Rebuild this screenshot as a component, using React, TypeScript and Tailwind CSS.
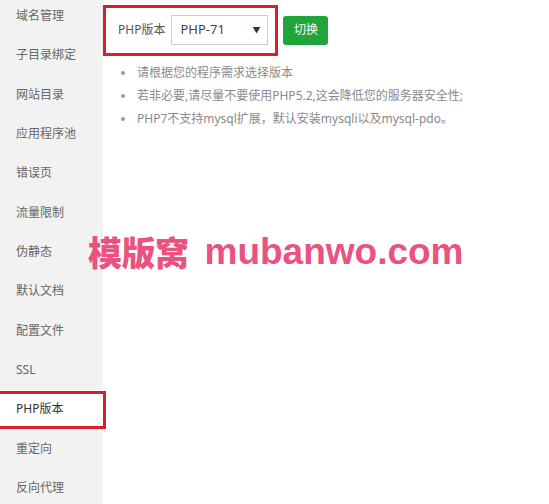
import React from 'react';

const menu = [
  '域名管理',
  '子目录绑定',
  '网站目录',
  '应用程序池',
  '错误页',
  '流量限制',
  '伪静态',
  '默认文档',
  '配置文件',
  'SSL',
  'PHP版本',
  '重定向',
  '反向代理',
];

const tips = [
  '请根据您的程序需求选择版本',
  '若非必要,请尽量不要使用PHP5.2,这会降低您的服务器安全性;',
  'PHP7不支持mysql扩展，默认安装mysqli以及mysql-pdo。',
];

const font = { fontFamily: '"Noto Sans", "Noto Sans CJK SC", sans-serif' };

export default function App() {
  return (
    <div
      className="relative flex w-[549px] h-[504px] overflow-hidden bg-white text-[12px] text-[#555]"
      style={font}
    >
      {/* Sidebar */}
      <div className="w-[103px] shrink-0 bg-[#f2f2f2] flex flex-col mt-[-3.7px]">
        {menu.map((item) => {
          const active = item === 'PHP版本';
          return (
            <div
              key={item}
              className={`relative h-[39.33px] shrink-0 flex items-center pl-[16px] ${active ? 'bg-white text-[#333]' : 'text-[#666]'}`}
            >
              {item}
              {active && (
                <div className="absolute left-[-3px] right-[-3px] top-[1px] bottom-0 border-[3px] border-[#d3222d]" />
              )}
            </div>
          );
        })}
      </div>

      {/* Main */}
      <div className="relative flex-1 pl-[15px] pt-[15px]">
        <div className="flex items-center h-[30px]">
          <span className="text-[12px] text-[#555]">PHP版本</span>
          <div className="ml-[6px] w-[97px] h-[30px] border border-[#ccc] bg-white flex items-center justify-between pl-[8px] pr-[7px]">
            <span className="text-[13px] text-[#444]">PHP-71</span>
            <span className="text-[8px] text-[#333]">▼</span>
          </div>
          <button className="ml-[15px] w-[45px] h-[29px] rounded-[3px] bg-[#20a53a] text-white text-[12px]">
            切换
          </button>
        </div>
        <div className="absolute left-0 top-[5px] w-[175px] h-[51px] border-[3px] border-[#d3222d]" />

        <ul className="mt-[16px] flex flex-col">
          {tips.map((t) => (
            <li key={t} className="flex items-center h-[23px] text-[12px] text-[#8a8a8a]">
              <span className="w-[4px] h-[4px] rounded-full bg-[#999] ml-[3px] mr-[12px]" />
              {t}
            </li>
          ))}
        </ul>
      </div>

      {/* Watermark */}
      <div className="absolute left-[88px] top-[224px] flex items-center text-[#ea5281] whitespace-nowrap pointer-events-none">
        <span
          className="text-[34px] font-black tracking-[-0.5px]"
          style={{ fontFamily: '"Noto Sans CJK SC", sans-serif' }}
        >
          模版窝
        </span>
        <span
          className="ml-[16px] text-[37px] font-bold"
          style={{ fontFamily: '"Liberation Sans", sans-serif' }}
        >
          mubanwo.com
        </span>
      </div>
    </div>
  );
}
